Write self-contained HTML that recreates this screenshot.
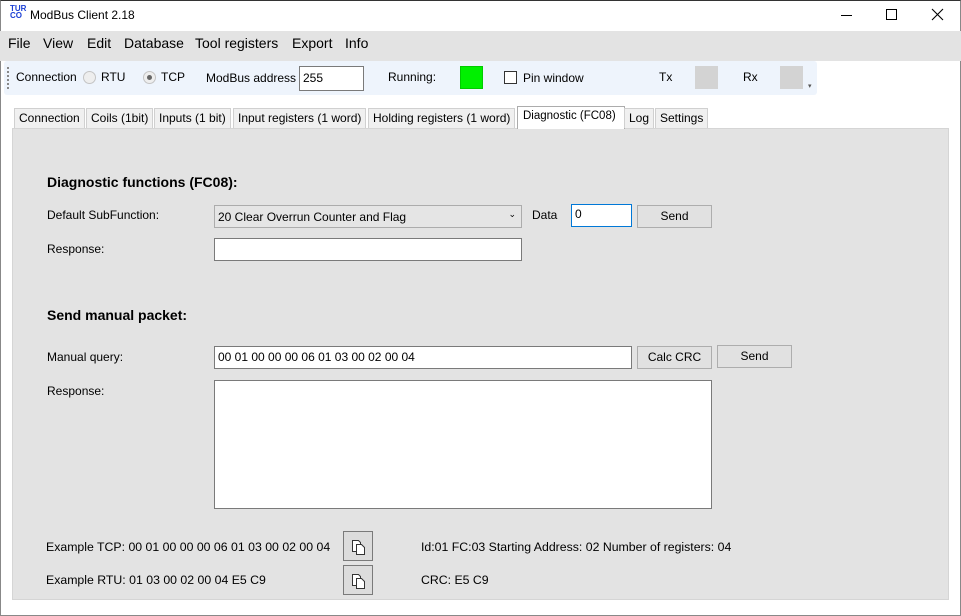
<!DOCTYPE html>
<html><head><style>
*{box-sizing:border-box;margin:0;padding:0}
body{width:961px;height:616px;background:#fff;font-family:"Liberation Sans",sans-serif;font-size:12px;color:#000;position:relative;overflow:hidden}
.a{position:absolute;white-space:nowrap}
.menu{position:absolute;left:0;top:31px;width:961px;height:30px;background:#e3e3e3}
.menu span{position:absolute;top:4px;font-size:14px}
.tb{position:absolute;left:4px;top:61px;width:813px;height:34px;background:#eef4fc;border-radius:3px}
.in{position:absolute;background:#fff;border:1px solid #7a7a7a;height:23px;padding:2px 3px;font-size:12px;white-space:nowrap}
.btn{position:absolute;background:#e1e1e1;border:1px solid #adadad;height:23px;text-align:center;line-height:21px}
.tab{position:absolute;top:108px;height:20px;border:1px solid #d0d0d0;border-bottom:none;background:#f0f0f0;line-height:19px;padding:0 4px;font-size:12px;white-space:nowrap}
.panel{position:absolute;left:12px;top:128px;width:937px;height:472px;background:#e3e3e3;border:1px solid #d5d5d5}
.rad{position:absolute;width:13px;height:13px;border-radius:50%;border:1px solid #c4c4c4;background:#eee}
b{font-weight:bold}
.cp{position:absolute;width:30px;height:30px;border:1px solid #7a7a7a;background:#dcdcdc}
</style></head><body>
<div class="a" style="left:0;top:0;width:961px;height:616px;border:1px solid #888;border-top-color:#333"></div>
<div class="a" style="left:10px;top:5px;color:#1a3fd4;font-size:8px;line-height:7px;font-weight:bold">TUR<br>CO</div>
<div class="a" style="left:30px;top:8px;font-size:12px">ModBus Client 2.18</div>
<div class="a" style="left:841px;top:15px;width:11px;border-top:1px solid #000"></div>
<div class="a" style="left:886px;top:9px;width:11px;height:11px;border:1px solid #000"></div>
<div class="a" style="left:931px;top:8px;width:13px;height:13px"><svg width="13" height="13"><path d="M1 1L12 12M12 1L1 12" stroke="#000" stroke-width="1.1"/></svg></div>
<div class="menu"><span style="left:8px">File</span><span style="left:43px">View</span><span style="left:87px">Edit</span><span style="left:124px">Database</span><span style="left:195px">Tool registers</span><span style="left:292px">Export</span><span style="left:345px">Info</span></div>
<div class="tb"></div>
<div class="a" style="left:7px;top:67px;height:22px;border-left:2px dotted #888"></div>
<div class="a" style="left:16px;top:70px">Connection</div>
<div class="rad" style="left:83px;top:71px"></div><div class="a" style="left:101px;top:70px">RTU</div>
<div class="rad" style="left:143px;top:71px"></div><div class="a" style="left:147px;top:75px;width:5px;height:5px;border-radius:50%;background:#666"></div><div class="a" style="left:161px;top:70px">TCP</div>
<div class="a" style="left:206px;top:71px">ModBus address</div>
<div class="in" style="left:299px;top:66px;width:65px;height:25px;padding-top:4px">255</div>
<div class="a" style="left:388px;top:70px">Running:</div>
<div class="a" style="left:460px;top:66px;width:23px;height:23px;background:#00f000;border:1px solid #0c0"></div>
<div class="a" style="left:504px;top:71px;width:13px;height:13px;border:1px solid #333;background:#fff"></div>
<div class="a" style="left:523px;top:71px">Pin window</div>
<div class="a" style="left:659px;top:70px">Tx</div>
<div class="a" style="left:695px;top:66px;width:23px;height:23px;background:#d3d3d3"></div>
<div class="a" style="left:743px;top:70px">Rx</div>
<div class="a" style="left:780px;top:66px;width:23px;height:23px;background:#d3d3d3"></div>
<div class="a" style="left:808px;top:82px;font-size:7px;color:#555">▾</div>
<div class="tab" style="left:14px">Connection</div>
<div class="tab" style="left:86px">Coils (1bit)</div>
<div class="tab" style="left:154px">Inputs (1 bit)</div>
<div class="tab" style="left:233px">Input registers (1 word)</div>
<div class="tab" style="left:368px">Holding registers (1 word)</div>
<div class="panel"></div>
<div class="tab" style="left:517px;top:106px;height:23px;background:#fff;border-color:#acacac;width:108px;padding-left:5px;font-size:11.5px">Diagnostic (FC08)</div>
<div class="tab" style="left:624px">Log</div>
<div class="tab" style="left:655px">Settings</div>
<div class="a" style="left:47px;top:174px;font-size:14px"><b>Diagnostic functions (FC08):</b></div>
<div class="a" style="left:47px;top:208px">Default SubFunction:</div>
<div class="in" style="left:214px;top:205px;width:308px;background:#e5e5e5;border-color:#acacac;padding-top:4px">20 Clear Overrun Counter and Flag<span style="position:absolute;right:5px;top:3px;font-size:9px">⌄</span></div>
<div class="a" style="left:532px;top:208px">Data</div>
<div class="in" style="left:571px;top:204px;width:61px;border-color:#0078d7">0</div>
<div class="btn" style="left:637px;top:205px;width:75px">Send</div>
<div class="a" style="left:47px;top:242px">Response:</div>
<div class="in" style="left:214px;top:238px;width:308px"></div>
<div class="a" style="left:47px;top:307px;font-size:14px"><b>Send manual packet:</b></div>
<div class="a" style="left:47px;top:350px">Manual query:</div>
<div class="in" style="left:214px;top:346px;width:418px;padding-top:3px">00 01 00 00 00 06 01 03 00 02 00 04</div>
<div class="btn" style="left:637px;top:346px;width:75px">Calc CRC</div>
<div class="btn" style="left:717px;top:345px;width:75px">Send</div>
<div class="a" style="left:47px;top:384px">Response:</div>
<div class="in" style="left:214px;top:380px;width:498px;height:129px"></div>
<div class="a" style="left:46px;top:540px;font-size:12.3px">Example TCP: 00 01 00 00 00 06 01 03 00 02 00 04</div>
<div class="a" style="left:46px;top:573px;font-size:12.3px">Example RTU: 01 03 00 02 00 04 E5 C9</div>
<div class="cp" style="left:343px;top:531px"><svg width="28" height="28"><path d="M8.5 8.5h6l2 2v9h-8z" fill="#fff" stroke="#333"/><path d="M12.5 12.5h5l3 3v7h-8z" fill="#fff" stroke="#333"/></svg></div>
<div class="cp" style="left:343px;top:565px"><svg width="28" height="28"><path d="M8.5 8.5h6l2 2v9h-8z" fill="#fff" stroke="#333"/><path d="M12.5 12.5h5l3 3v7h-8z" fill="#fff" stroke="#333"/></svg></div>
<div class="a" style="left:421px;top:540px;font-size:12.3px">Id:01 FC:03 Starting Address: 02 Number of registers: 04</div>
<div class="a" style="left:421px;top:573px;font-size:12.3px">CRC: E5 C9</div>
</body></html>
